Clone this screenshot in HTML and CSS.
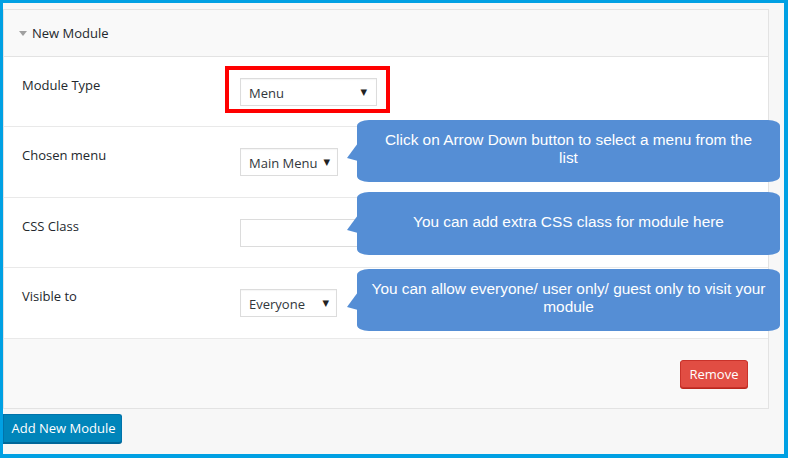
FILE: index.html
```html
<!DOCTYPE html>
<html>
<head>
<meta charset="utf-8">
<link rel="stylesheet" href="styles.css">
</head>
<body>
<div class="frame">
  <div class="panel">
    <div class="panel-head"><span class="caret"></span><span>New Module</span></div>
    <div class="row">
      <div class="label">Module Type</div>
      <div class="field"><div class="select sel-type"><span>Menu</span><span class="arrow">▼</span></div></div>
    </div>
    <div class="row row-tall">
      <div class="label">Chosen menu</div>
      <div class="field"><div class="select sel-menu"><span>Main Menu</span><span class="arrow">▼</span></div></div>
    </div>
    <div class="row">
      <div class="label">CSS Class</div>
      <div class="field"><div class="input"></div></div>
    </div>
    <div class="row row-tall">
      <div class="label">Visible to</div>
      <div class="field"><div class="select sel-vis"><span>Everyone</span><span class="arrow">▼</span></div></div>
    </div>
    <div class="panel-foot"><button class="btn-remove">Remove</button></div>
  </div>
  <button class="btn-add">Add New Module</button>

  <div class="highlight"></div>
  <div class="callout c1">Click on Arrow Down button to select a menu from the<br>list</div>
  <div class="callout c2">You can add extra CSS class for module here</div>
  <div class="callout c3">You can allow everyone/ user only/ guest only to visit your<br>module</div>
</div>
</body>
</html>
```

FILE: styles.css
```css
html, body {
  margin: 0;
  padding: 0;
}
body {
  width: 788px;
  height: 458px;
  overflow: hidden;
  font-family: "Open Sans", "Noto Sans", sans-serif;
}
.frame {
  position: relative;
  box-sizing: border-box;
  width: 788px;
  height: 458px;
  border-style: solid;
  border-color: #00a0e3;
  border-width: 3px 4px 4px 3px;
  background: #f7f7f7;
  padding-top: 6px;
}
.panel {
  margin-right: 15px;
  border: 1px solid #e3e3e3;
  background: #fff;
}
.panel-head {
  height: 46px;
  display: flex;
  align-items: center;
  gap: 5px;
  padding-left: 15px;
  background: #f9f9f9;
  border-bottom: 1px solid #e3e3e3;
  font-size: 13px;
  color: #23282d;
}
.caret {
  width: 0;
  height: 0;
  border-left: 4px solid transparent;
  border-right: 4px solid transparent;
  border-top: 5px solid #a0a0a0;
  margin-top: 1px;
}
.row {
  display: flex;
  height: 70px;
  box-sizing: border-box;
  border-bottom: 1px solid #e9e9e9;
}
.row-tall {
  height: 71px;
}
.label {
  width: 218px;
  padding-left: 18px;
  padding-top: 19px;
  font-size: 13px;
  line-height: 18px;
  color: #23282d;
}
.field {
  padding-top: 21px;
}
.select {
  box-sizing: border-box;
  height: 28px;
  border: 1px solid #dcdcdc;
  background: #fff;
  display: flex;
  align-items: center;
  justify-content: space-between;
  padding: 1px 9px 0 8px;
  font-size: 13px;
  color: #32373c;
  box-shadow: inset 0 1px 1px rgba(0,0,0,0.04);
}
.arrow {
  font-size: 8.5px;
  color: #222;
  font-family: "DejaVu Sans", sans-serif;
  margin-top: -2px;
}
.sel-type { width: 137px; }
.sel-menu { width: 98px; padding-right: 7px; }
.sel-vis { width: 97px; padding-right: 7px; }
.input {
  box-sizing: border-box;
  width: 160px;
  height: 28px;
  border: 1px solid #dcdcdc;
  background: #fff;
}
.panel-foot {
  height: 69px;
  display: flex;
  justify-content: flex-end;
  align-items: flex-start;
  padding: 21px 20px 0 0;
  box-sizing: border-box;
  background: #f9f9f9;
}
.btn-remove {
  width: 68px;
  height: 28px;
  border: 1px solid #c9322a;
  border-radius: 3px;
  background: #e14d43;
  color: #fff;
  font-family: "Open Sans", sans-serif;
  font-size: 13px;
  padding: 0;
  box-shadow: 0 1px 0 #ba281e;
}
.btn-add {
  display: block;
  margin-top: 5px;
  width: 119px;
  height: 29px;
  border: 1px solid #0073aa;
  border-bottom-color: #006799;
  border-radius: 0 3px 3px 0;
  background: #0085ba;
  color: #fff;
  font-family: "Open Sans", sans-serif;
  font-size: 13px;
  padding: 0 0 1px 2px;
  box-shadow: 0 1px 0 #006799;
}
.highlight {
  position: absolute;
  left: 222px;
  top: 63px;
  width: 165px;
  height: 47px;
  box-sizing: border-box;
  border: 4px solid #ff0000;
}
.callout {
  position: absolute;
  left: 354px;
  width: 423px;
  height: 62px;
  box-sizing: border-box;
  background: #558ed5;
  border-radius: 12px / 6px;
  color: #fff;
  font-family: "Liberation Sans", Arial, sans-serif;
  font-size: 15.4px;
  line-height: 18px;
  text-align: center;
  display: flex;
  align-items: center;
  justify-content: center;
  padding-bottom: 4px;
}
.callout::before {
  content: "";
  position: absolute;
  left: -10px;
  top: 23px;
  width: 11px;
  height: 18px;
  background: #558ed5;
  clip-path: polygon(100% 0, 0 83%, 100% 100%);
}
.c1 { top: 117px; }
.c2 { top: 189px; height: 63px; }
.c3 { top: 266px; }
```
